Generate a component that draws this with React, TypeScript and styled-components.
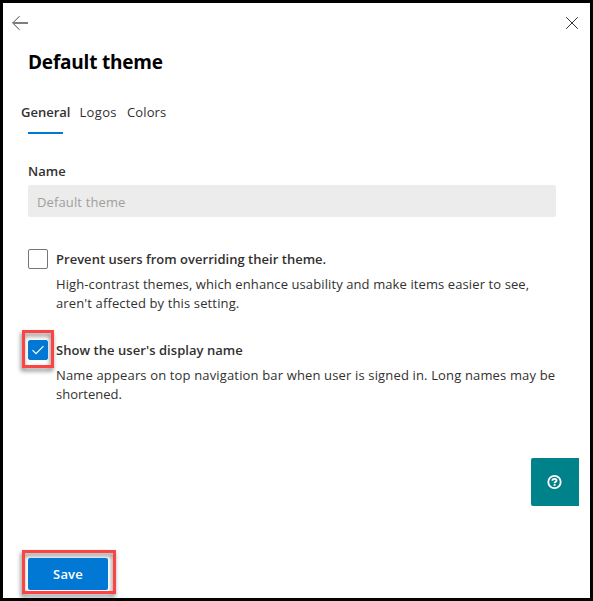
import React from 'react';
import styled, { createGlobalStyle } from 'styled-components';

const GlobalStyle = createGlobalStyle`
  *, *::before, *::after { box-sizing: border-box; }
  body { margin: 0; background: #fff; overflow: hidden; }
`;

const Panel = styled.main`
  position: relative;
  display: flex;
  flex-direction: column;
  width: 593px;
  height: 601px;
  border: 3px solid #000;
  background: #fff;
  color: #323130;
  font: 400 13px/20px 'Open Sans', 'Noto Sans', sans-serif;
  white-space: nowrap;
`;

const Header = styled.header`
  display: flex;
  align-items: center;
  justify-content: space-between;
  height: 40px;
  padding: 0 11px 0 8px;
`;

const IconButton = styled.button`
  display: flex;
  padding: 0;
  border: 0;
  background: none;
  color: #323130;
`;

const Title = styled.h1`
  margin: 6px 0 0 25px;
  color: #000;
  font-size: 19px;
  font-weight: 700;
  line-height: 26px;
  letter-spacing: -0.2px;
`;

const TabList = styled.nav`
  display: flex;
  gap: 10px;
  margin: 27px 0 0 18px;
`;

const Tab = styled.button<{ $active?: boolean; $spacing?: number }>`
  display: flex;
  flex-direction: column;
  gap: 10px;
  height: 32px;
  margin-right: ${(p) => (p.$active ? -1 : 0)}px;
  padding: 0;
  border: 0;
  background: none;
  color: inherit;
  font: inherit;
  font-weight: ${(p) => (p.$active ? 600 : 400)};
  letter-spacing: ${(p) => p.$spacing ?? 0}px;

  &::after {
    content: '';
    display: ${(p) => (p.$active ? 'block' : 'none')};
    width: 35px;
    height: 2px;
    margin-left: 7px;
    background: #0078d4;
  }
`;

const Form = styled.div`
  display: flex;
  flex-direction: column;
  flex: 1;
  padding: 27px 34px 5px 25px;
`;

const FieldLabel = styled.label`
  margin-bottom: 4px;
  font-weight: 600;
`;

const TextField = styled.div`
  width: 528px;
  height: 32px;
  padding: 7px 9px 5px;
  border-radius: 2px;
  background: #ececec;
  color: #a19f9d;
  letter-spacing: 0.13px;
`;

const Option = styled.section<{ $top: number }>`
  display: flex;
  gap: 8px;
  margin-top: ${(p) => p.$top}px;
`;

const CheckboxSlot = styled.div`
  position: relative;
  width: 20px;
  height: 20px;
`;

const Checkbox = styled.span<{ $checked?: boolean }>`
  position: relative;
  display: flex;
  align-items: center;
  justify-content: center;
  width: 20px;
  height: 20px;
  border: 1px solid ${(p) => (p.$checked ? '#0078d4' : '#777573')};
  border-radius: 2px;
  background: ${(p) => (p.$checked ? '#0078d4' : '#fff')};
  color: #fff;
`;

const Highlight = styled.span<{ $top: number; $right: number; $bottom: number }>`
  position: absolute;
  inset: ${(p) => `-${p.$top}px -${p.$right}px -${p.$bottom}px -6px`};
  border: 3px solid #fb4444;
  filter: drop-shadow(-1px 3px 2px rgba(0, 0, 0, 0.5));
  pointer-events: none;
`;

const OptionText = styled.div`
  display: flex;
  flex-direction: column;
`;

const OptionTitle = styled.strong<{ $spacing: number }>`
  font-weight: 600;
  letter-spacing: ${(p) => p.$spacing}px;
`;

const Description = styled.p`
  margin: 6px 0 0;
  line-height: 19px;
`;

const Line = styled.span<{ $spacing: number }>`
  display: block;
  letter-spacing: ${(p) => p.$spacing}px;
`;

const SaveSlot = styled.div`
  position: relative;
  width: 80px;
  height: 32px;
  margin-top: auto;
  margin-bottom: 3px;
`;

const SaveButton = styled.button`
  position: relative;
  z-index: 1;
  width: 80px;
  height: 32px;
  padding: 0;
  border: 0;
  border-radius: 2px;
  background: #0078d4;
  color: #fff;
  font: inherit;
  font-weight: 600;
  letter-spacing: 0.2px;
`;

const HelpButton = styled.button`
  position: absolute;
  top: 455px;
  right: 11px;
  display: flex;
  align-items: center;
  justify-content: center;
  width: 48px;
  height: 48px;
  padding: 0 1px 0 0;
  border: 0;
  border-radius: 2px 0 0 2px;
  background: #00828a;
  color: #fff;
`;

export default function App() {
  return (
    <>
      <GlobalStyle />
      <Panel>
        <Header>
          <IconButton aria-label="Back">
            <svg width="18" height="16" viewBox="0 0 18 16" fill="none" stroke="currentColor">
              <path d="M8.500 1.200 1.700 8l6.800 6.800" strokeWidth="0.9" />
              <path d="M1.700 8H17" stroke="#7f7e7d" strokeWidth="2" />
            </svg>
          </IconButton>
          <IconButton aria-label="Close">
            <svg width="14" height="14" viewBox="0 0 14 14" fill="none" stroke="currentColor">
              <path d="m1.200 1.200 11.600 11.600M12.800 1.200 1.200 12.800" />
            </svg>
          </IconButton>
        </Header>
        <Title>Default theme</Title>
        <TabList>
          <Tab $active>General</Tab>
          <Tab $spacing={0.35}>Logos</Tab>
          <Tab $spacing={0.15}>Colors</Tab>
        </TabList>
        <Form>
          <FieldLabel>Name</FieldLabel>
          <TextField>Default theme</TextField>
          <Option $top={32}>
            <CheckboxSlot>
              <Checkbox />
            </CheckboxSlot>
            <OptionText>
              <OptionTitle $spacing={0.02}>Prevent users from overriding their theme.</OptionTitle>
              <Description>
                <Line $spacing={0.1}>
                  High-contrast themes, which enhance usability and make items easier to see,
                </Line>
                <Line $spacing={0.13}>aren't affected by this setting.</Line>
              </Description>
            </OptionText>
          </Option>
          <Option $top={27}>
            <CheckboxSlot>
              <Highlight $top={10} $right={6} $bottom={8} />
              <Checkbox $checked>
                <svg width="14" height="12" viewBox="0 0 14 12" fill="none" stroke="currentColor">
                  <path d="m1.500 6.200 3.500 3.500 7.500-7.500" strokeWidth="1.200" />
                </svg>
              </Checkbox>
            </CheckboxSlot>
            <OptionText>
              <OptionTitle $spacing={0.05}>Show the user's display name</OptionTitle>
              <Description>
                <Line $spacing={0.15}>
                  Name appears on top navigation bar when user is signed in. Long names may be
                </Line>
                <Line $spacing={0}>shortened.</Line>
              </Description>
            </OptionText>
          </Option>
          <SaveSlot>
            <Highlight $top={8} $right={8} $bottom={4} />
            <SaveButton>Save</SaveButton>
          </SaveSlot>
        </Form>
        <HelpButton aria-label="Help">
          <svg width="16" height="16" viewBox="0 0 16 16" fill="none" stroke="currentColor">
            <circle cx="7.500" cy="8" r="6.200" strokeWidth="1.800" />
            <path d="M5.400 6.700C5.400 5.300 6.400 4.900 7.500 4.900s2 .6 2 1.600C9.500 7.700 7.600 7.700 7.600 9.300" strokeWidth="1.900" />
            <path d="M7.600 10.100v1.700" strokeWidth="2" />
          </svg>
        </HelpButton>
      </Panel>
    </>
  );
}
